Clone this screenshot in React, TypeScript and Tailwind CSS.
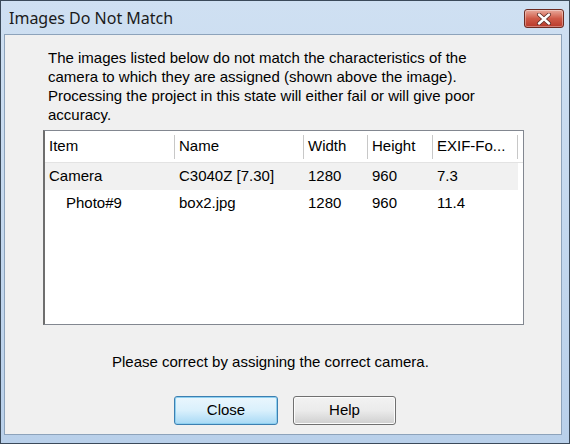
import React from "react";

const COLS = [
  { key: "item", label: "Item", w: 130 },
  { key: "name", label: "Name", w: 129 },
  { key: "width", label: "Width", w: 64 },
  { key: "height", label: "Height", w: 65 },
  { key: "exif", label: "EXIF-Fo...", w: 85 },
];

const ROWS = [
  { item: "Camera", name: "C3040Z [7.30]", width: "1280", height: "960", exif: "7.3", indent: false, shaded: true },
  { item: "Photo#9", name: "box2.jpg", width: "1280", height: "960", exif: "11.4", indent: true, shaded: false },
];

const MESSAGE = [
  "The images listed below do not match the characteristics of the",
  "camera to which they are assigned (shown above the image).",
  "Processing the project in this state will either fail or will give poor",
  "accuracy.",
];

function CloseGlyph() {
  return (
    <svg width="16" height="12" viewBox="0 0 16 12">
      <path d="M3 1.5 L13 10.5 M13 1.5 L3 10.5" stroke="#5a2a24" strokeWidth="4" strokeLinecap="round" />
      <path d="M3 1.5 L13 10.5 M13 1.5 L3 10.5" stroke="#ffffff" strokeWidth="2.4" strokeLinecap="round" />
    </svg>
  );
}

export default function App() {
  return (
    <div className="w-[570px] h-[444px] flex flex-col bg-gradient-to-b from-[#cfe0f2] to-[#b9d0ea] border border-[#3b4a5a] font-['Liberation_Sans',Arial,sans-serif] text-[15px] text-black">
      {/* title bar */}
      <div className="h-[33px] flex items-center justify-between pl-[8px] pr-[5px] shrink-0">
        <span className="font-['Noto_Sans',sans-serif] text-[16px] text-[#1b1b1b] leading-none">
          Images Do Not Match
        </span>
        <div className="w-[40px] h-[19px] mt-[2px] flex items-center justify-center rounded-[3px] border border-[#6d2b22] bg-gradient-to-b from-[#e8a99c] via-[#cf5a48] to-[#b8392a] shadow-[inset_0_0_0_1px_rgba(255,255,255,0.35)]">
          <CloseGlyph />
        </div>
      </div>

      {/* client */}
      <div className="flex-1 flex pl-[3px] pr-[7px] pb-[8px] min-h-0">
        <div className="flex-1 flex flex-col bg-[#f0f0f0] border border-[#8da3bb]">
          <div className="mt-[13px] ml-[43px] leading-[19px]">
            {MESSAGE.map((line) => (
              <div key={line} className="whitespace-nowrap">
                {line}
              </div>
            ))}
          </div>

          {/* list view */}
          <div className="mt-[6px] ml-[38px] w-[481px] h-[195px] bg-white border border-[#828790] border-l-2 border-l-[#6e6e6e]">
            <div className="h-[32px] flex items-center border-b border-[#e3e3e3]">
              {COLS.map((c) => (
                <div
                  key={c.key}
                  className="h-[24px] flex items-center pl-[4px] border-r border-[#c8c8c8] whitespace-nowrap"
                  style={{ width: c.w }}
                >
                  {c.label}
                </div>
              ))}
            </div>
            {ROWS.map((r) => (
              <div
                key={r.item}
                className={`h-[27px] w-[473px] flex items-center whitespace-nowrap ${r.shaded ? "bg-[#f1f1f1]" : ""}`}
              >
                <div className={r.indent ? "w-[130px] pl-[21px]" : "w-[130px] pl-[4px]"}>{r.item}</div>
                <div className="w-[129px] pl-[4px]">{r.name}</div>
                <div className="w-[64px] pl-[4px]">{r.width}</div>
                <div className="w-[65px] pl-[4px]">{r.height}</div>
                <div className="w-[85px] pl-[4px]">{r.exif}</div>
              </div>
            ))}
          </div>

          <div className="mt-[28px] ml-[107px] leading-[18px]">
            Please correct by assigning the correct camera.
          </div>

          <div className="mt-[25px] ml-[169px] flex gap-[15px]">
            <button className="w-[104px] h-[29px] rounded-[3px] border border-[#3c7fb1] bg-gradient-to-b from-[#eaf6fd] via-[#d9f0fc] to-[#a7d9f5] shadow-[inset_0_0_0_1px_#8fd0f0] text-[15px]">
              Close
            </button>
            <button className="w-[103px] h-[29px] rounded-[3px] border border-[#707070] bg-gradient-to-b from-[#f2f2f2] via-[#ebebeb] to-[#cfcfcf] shadow-[inset_0_0_0_1px_#fcfcfc] text-[15px]">
              Help
            </button>
          </div>
        </div>
      </div>
    </div>
  );
}
